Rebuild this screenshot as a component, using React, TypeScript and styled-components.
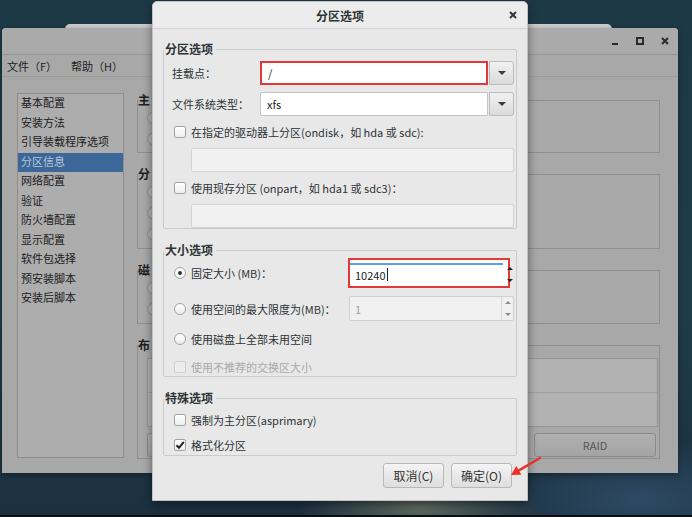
import React from 'react';
import styled, { createGlobalStyle } from 'styled-components';

const GlobalStyle = createGlobalStyle`
  html, body {
    margin: 0;
    padding: 0;
  }
  body {
    font-family: 'Noto Sans CJK SC', 'Noto Sans', sans-serif;
    font-size: 11px;
    color: #2e3436;
  }
  * {
    box-sizing: border-box;
  }
`;

const Desktop = styled.div`
  position: relative;
  width: 692px;
  height: 517px;
  overflow: hidden;
  background:
    radial-gradient(ellipse 120px 40px at 420px 508px, rgba(105, 115, 100, 0.85), transparent),
    radial-gradient(ellipse 160px 60px at 640px 500px, rgba(50, 80, 110, 0.8), transparent),
    linear-gradient(180deg, #1d3946 0%, #1f3c49 60%, #1c3040 100%);
  border-bottom: 2px solid #0b0e11;
`;

/* ---------- background window ---------- */

const GhostWindow = styled.div`
  position: absolute;
  left: 65px;
  top: 24px;
  width: 547px;
  height: 12px;
  background: #cdcdcd;
  border-radius: 5px 5px 0 0;
`;

const MainWindow = styled.div`
  position: absolute;
  left: 2px;
  top: 28px;
  width: 676px;
  height: 445px;
  background: #a8a8a8;
  border-radius: 4px 4px 0 0;
  display: flex;
  flex-direction: column;
  box-shadow: 0 2px 6px rgba(0, 0, 0, 0.35);
`;

const WinTitleBar = styled.div`
  height: 27px;
  display: flex;
  justify-content: flex-end;
  align-items: center;
  padding-right: 1px;
  border-bottom: 1px solid #949494;
  background: #aaaaaa;
  border-radius: 4px 4px 0 0;
`;

const WinControl = styled.span`
  width: 25px;
  height: 16px;
  display: flex;
  align-items: center;
  justify-content: center;
`;

const MenuBar = styled.div`
  height: 22px;
  display: flex;
  align-items: center;
  gap: 14px;
  padding-left: 5px;
  border-bottom: 1px solid #9b9b9b;
`;

const MenuItem = styled.span`
  color: #222;
  font-size: 11px;
`;

const WinBody = styled.div`
  display: flex;
  align-items: flex-start;
  gap: 13px;
  padding: 16px 18px 0 15px;
`;

const NavList = styled.div`
  width: 107px;
  height: 365px;
  background: #adadad;
  border: 1px solid #8d8d8d;
`;

const NavItem = styled.div<{ $active?: boolean }>`
  height: 19.5px;
  line-height: 17px;
  padding-left: 3px;
  font-size: 11px;
  white-space: nowrap;
  color: ${(p) => (p.$active ? '#b8c6d8' : '#1b1b1b')};
  background: ${(p) => (p.$active ? '#3c6899' : 'transparent')};
`;

const RightPanel = styled.div`
  width: 523px;
  display: flex;
  flex-direction: column;
  gap: 14px;
`;

const BgGroup = styled.fieldset<{ $h: number }>`
  margin: 0;
  padding: 0;
  min-width: 0;
  height: ${(p) => p.$h}px;
  border: 1px solid #8e8e8e;
`;

const BgLegend = styled.legend`
  padding: 0 3px 0 0;
  font-size: 12px;
  font-weight: bold;
  line-height: 14px;
  color: #1d1d1d;
`;

const BgContent = styled.div`
  display: flex;
  flex-direction: column;
  padding: 0 1px 0 9px;
`;

const BgOption = styled.div`
  height: 21px;
  display: flex;
  align-items: center;
`;

const BgRadio = styled.span`
  width: 12px;
  height: 12px;
  border-radius: 50%;
  border: 1px solid #8a8a8a;
  background: #b2b2b2;
`;

const BgTable = styled.div`
  margin-top: 6px;
  height: 69px;
  background: #b2b2b2;
  border: 1px solid #939393;
  display: flex;
  flex-direction: column;
`;

const BgTableRow = styled.div`
  flex: 1;
  border-bottom: 1px solid #9e9e9e;
  &:last-child {
    border-bottom: none;
  }
`;

const BgButtonRow = styled.div`
  margin-top: 6px;
  display: grid;
  grid-template-columns: repeat(4, 122px);
  gap: 7px;
`;

const BgButton = styled.div`
  height: 24px;
  display: flex;
  align-items: center;
  justify-content: center;
  border: 1px solid #8a8a8a;
  border-radius: 3px;
  background: linear-gradient(#b0b0b0, #a4a4a4);
  color: #555;
  font-size: 11px;
`;

/* ---------- dialog ---------- */

const Dialog = styled.div`
  position: absolute;
  left: 152px;
  top: 1px;
  width: 376px;
  height: 500px;
  background: #e8e8e8;
  border: 1px solid #c2c2c2;
  border-radius: 5px 5px 0 0;
  box-shadow: 0 3px 10px rgba(0, 0, 0, 0.45);
  display: flex;
  flex-direction: column;
`;

const DialogTitleBar = styled.div`
  height: 27px;
  display: grid;
  grid-template-columns: 1fr auto 1fr;
  align-items: center;
  background: #ececec;
  border-bottom: 1px solid #d2d2d2;
  border-radius: 5px 5px 0 0;
`;

const DialogTitle = styled.span`
  grid-column: 2;
  font-size: 12px;
  font-weight: bold;
  color: #2e3436;
`;

const DialogClose = styled.span`
  justify-self: end;
  padding-right: 10px;
  display: flex;
`;

const DialogBody = styled.div`
  padding: 13px 10px 0 10px;
  display: flex;
  flex-direction: column;
`;

const GroupStack = styled.div`
  display: flex;
  flex-direction: column;
  gap: 14px;
`;

const Group = styled.fieldset<{ $h: number }>`
  margin: 0;
  padding: 0;
  min-width: 0;
  height: ${(p) => p.$h}px;
  border: 1px solid #cbcbcb;
  border-radius: 2px;
  display: flex;
  flex-direction: column;
`;

const Legend = styled.legend`
  padding: 0 3px 0 1px;
  font-size: 12px;
  font-weight: bold;
  line-height: 14px;
  color: #2e3436;
`;

const GroupContent = styled.div<{ $top: number; $gap: number }>`
  display: flex;
  flex-direction: column;
  padding-top: ${(p) => p.$top}px;
  gap: ${(p) => p.$gap}px;
`;

const FieldRow = styled.div`
  display: grid;
  grid-template-columns: 88px 1fr;
  align-items: center;
  padding: 0 2px 0 8px;
`;

const FieldLabel = styled.span`
  color: #2e3436;
  white-space: nowrap;
`;

const Combo = styled.div`
  display: flex;
  height: 24px;
`;

const Entry = styled.div<{ $highlight?: boolean }>`
  flex: 1;
  display: flex;
  align-items: center;
  padding-left: 6px;
  background: #fff;
  border: ${(p) => (p.$highlight ? '2px solid #e2383a' : '1px solid #c4c4c4')};
  border-radius: ${(p) => (p.$highlight ? '0' : '2px 0 0 2px')};
  font-size: 11px;
  color: #222;
`;

const ComboButton = styled.div`
  width: 25px;
  margin-left: 1px;
  display: flex;
  align-items: center;
  justify-content: center;
  background: linear-gradient(#f1f1f1, #dadada);
  border: 1px solid #bcbcbc;
  border-radius: 0 3px 3px 0;
  &::after {
    content: '';
    border-left: 4px solid transparent;
    border-right: 4px solid transparent;
    border-top: 4px solid #3a3a3a;
  }
`;

const OptionRow = styled.div<{ $h?: number; $disabled?: boolean }>`
  height: ${(p) => p.$h ?? 18}px;
  line-height: 16px;
  display: flex;
  align-items: center;
  gap: 5px;
  padding-left: 10px;
  white-space: nowrap;
  color: ${(p) => (p.$disabled ? '#a9a9a9' : '#2e3436')};
`;

const CheckBox = styled.span<{ $disabled?: boolean }>`
  width: 12px;
  height: 12px;
  flex: none;
  display: flex;
  align-items: center;
  justify-content: center;
  border: 1px solid ${(p) => (p.$disabled ? '#d0d0d0' : '#a2a2a2')};
  border-radius: 2px;
  background: ${(p) => (p.$disabled ? '#ececec' : 'linear-gradient(#ffffff, #ededed)')};
`;

const Radio = styled.span<{ $checked?: boolean }>`
  width: 12px;
  height: 12px;
  flex: none;
  display: flex;
  align-items: center;
  justify-content: center;
  border: 1px solid #a2a2a2;
  border-radius: 50%;
  background: linear-gradient(#ffffff, #ededed);
  &::after {
    content: '';
    width: 4px;
    height: 4px;
    border-radius: 50%;
    background: #2e3436;
    display: ${(p) => (p.$checked ? 'block' : 'none')};
  }
`;

const WideEntry = styled.div`
  height: 24px;
  margin: 0 2px 0 27px;
  background: #f1f1f1;
  border: 1px solid #d3d3d3;
  border-radius: 2px;
`;

const SizeRow = styled.div<{ $h: number }>`
  height: ${(p) => p.$h}px;
  display: grid;
  grid-template-columns: 175px 1fr;
  align-items: center;
  padding: 0 2px 0 10px;
`;

const RadioLabel = styled.span`
  display: flex;
  align-items: center;
  gap: 5px;
  line-height: 16px;
  white-space: nowrap;
`;

const SpinHighlight = styled.div`
  height: 30px;
  width: 162px;
  margin-left: -1px;
  display: flex;
  border: 2px solid #e2383a;
  background: #fff;
  padding-top: 3px;
`;

const SpinFocusText = styled.div`
  flex: 1;
  display: flex;
  align-items: center;
  padding: 0 0 2px 5px;
  border-top: 2px solid #5f9be0;
  margin-right: 3px;
  color: #222;
  &::after {
    content: '';
    width: 1px;
    height: 13px;
    margin-left: 1px;
    background: #222;
  }
`;

const SpinArrows = styled.div<{ $dark?: boolean }>`
  width: ${(p) => (p.$dark ? '7px' : '12px')};
  margin-right: ${(p) => (p.$dark ? '-5px' : '0')};
  margin-top: ${(p) => (p.$dark ? '-1px' : '0')};
  display: flex;
  flex-direction: column;
  justify-content: space-around;
  align-items: center;
  border-left: ${(p) => (p.$dark ? 'none' : '1px solid #d6d6d6')};
`;

const Arrow = styled.span<{ $up?: boolean; $dark?: boolean }>`
  width: 0;
  height: 0;
  border-left: 3px solid transparent;
  border-right: 3px solid transparent;
  ${(p) => (p.$up ? 'border-bottom' : 'border-top')}: 3px solid ${(p) => (p.$dark ? '#222' : '#8c8c8c')};
`;

const SpinBox = styled.div`
  height: 25px;
  display: flex;
  background: #f0f0f0;
  border: 1px solid #d0d0d0;
  border-radius: 2px;
`;

const SpinText = styled.div`
  flex: 1;
  display: flex;
  align-items: center;
  padding-left: 5px;
  color: #a0a0a0;
`;

const ButtonRow = styled.div`
  display: flex;
  justify-content: flex-end;
  gap: 7px;
  padding: 7px 5px 0 0;
`;

const Button = styled.div`
  width: 61px;
  height: 25px;
  display: flex;
  align-items: center;
  justify-content: center;
  background: linear-gradient(#f4f4f4, #dedede);
  border: 1px solid #b8b8b8;
  border-radius: 3px;
  font-size: 12px;
  color: #333;
`;

const Annotation = styled.svg`
  position: absolute;
  left: 505px;
  top: 452px;
  pointer-events: none;
`;

const navItems = [
  '基本配置',
  '安装方法',
  '引导装载程序选项',
  '分区信息',
  '网络配置',
  '验证',
  '防火墙配置',
  '显示配置',
  '软件包选择',
  '预安装脚本',
  '安装后脚本',
];

const bgGroups = [
  { legend: '主', h: 60, radios: 2 },
  { legend: '分', h: 82, radios: 3 },
  { legend: '磁', h: 61, radios: 2 },
];

const CheckMark = () => (
  <svg width="10" height="10" viewBox="0 0 10 10">
    <path d="M1.5 5.2 L4 7.8 L8.8 1.8" fill="none" stroke="#222" strokeWidth="2" />
  </svg>
);

const CrossIcon = ({ color = '#2b2b2b' }: { color?: string }) => (
  <svg width="8" height="8" viewBox="0 0 8 8">
    <path d="M1 1 L7 7 M7 1 L1 7" stroke={color} strokeWidth="2" />
  </svg>
);

export default function App() {
  return (
    <>
      <GlobalStyle />
      <Desktop>
        <GhostWindow />
        <MainWindow>
          <WinTitleBar>
            <WinControl>
              <svg width="8" height="8" viewBox="0 0 8 8">
                <rect x="1" y="6" width="6" height="2" fill="#2b2b2b" />
              </svg>
            </WinControl>
            <WinControl>
              <svg width="8" height="8" viewBox="0 0 8 8">
                <rect x="1" y="1" width="6" height="6" fill="none" stroke="#2b2b2b" strokeWidth="2" />
              </svg>
            </WinControl>
            <WinControl>
              <CrossIcon />
            </WinControl>
          </WinTitleBar>
          <MenuBar>
            <MenuItem>文件（F）</MenuItem>
            <MenuItem>帮助（H）</MenuItem>
          </MenuBar>
          <WinBody>
            <NavList>
              {navItems.map((item) => (
                <NavItem key={item} $active={item === '分区信息'}>
                  {item}
                </NavItem>
              ))}
            </NavList>
            <RightPanel>
              {bgGroups.map((g) => (
                <BgGroup key={g.legend} $h={g.h}>
                  <BgLegend>{g.legend}</BgLegend>
                  <BgContent>
                    {Array.from({ length: g.radios }).map((_, i) => (
                      <BgOption key={i}>
                        <BgRadio />
                      </BgOption>
                    ))}
                  </BgContent>
                </BgGroup>
              ))}
              <BgGroup $h={121}>
                <BgLegend>布</BgLegend>
                <BgContent>
                  <BgTable>
                    <BgTableRow />
                    <BgTableRow />
                  </BgTable>
                  <BgButtonRow>
                    <BgButton />
                    <BgButton />
                    <BgButton />
                    <BgButton>RAID</BgButton>
                  </BgButtonRow>
                </BgContent>
              </BgGroup>
            </RightPanel>
          </WinBody>
        </MainWindow>

        <Dialog>
          <DialogTitleBar>
            <DialogTitle>分区选项</DialogTitle>
            <DialogClose>
              <CrossIcon color="#333" />
            </DialogClose>
          </DialogTitleBar>
          <DialogBody>
            <GroupStack>
              <Group $h={187}>
                <Legend>分区选项</Legend>
                <GroupContent $top={5} $gap={7}>
                  <FieldRow>
                    <FieldLabel>挂载点：</FieldLabel>
                    <Combo>
                      <Entry $highlight>/</Entry>
                      <ComboButton />
                    </Combo>
                  </FieldRow>
                  <FieldRow>
                    <FieldLabel>文件系统类型：</FieldLabel>
                    <Combo>
                      <Entry>xfs</Entry>
                      <ComboButton />
                    </Combo>
                  </FieldRow>
                  <OptionRow>
                    <CheckBox />
                    <span>在指定的驱动器上分区(ondisk，如 hda 或 sdc):</span>
                  </OptionRow>
                  <WideEntry />
                  <OptionRow>
                    <CheckBox />
                    <span>使用现存分区 (onpart，如 hda1 或 sdc3)：</span>
                  </OptionRow>
                  <WideEntry />
                </GroupContent>
              </Group>

              <Group $h={134}>
                <Legend>大小选项</Legend>
                <GroupContent $top={1} $gap={8}>
                  <SizeRow $h={30}>
                    <RadioLabel>
                      <Radio $checked />
                      <span>固定大小 (MB)：</span>
                    </RadioLabel>
                    <SpinHighlight>
                      <SpinFocusText>10240</SpinFocusText>
                      <SpinArrows $dark>
                        <Arrow $up $dark />
                        <Arrow $dark />
                      </SpinArrows>
                    </SpinHighlight>
                  </SizeRow>
                  <SizeRow $h={25}>
                    <RadioLabel>
                      <Radio />
                      <span>使用空间的最大限度为(MB)：</span>
                    </RadioLabel>
                    <SpinBox>
                      <SpinText>1</SpinText>
                      <SpinArrows>
                        <Arrow $up />
                        <Arrow />
                      </SpinArrows>
                    </SpinBox>
                  </SizeRow>
                  <OptionRow $h={20}>
                    <Radio />
                    <span>使用磁盘上全部未用空间</span>
                  </OptionRow>
                  <OptionRow $h={20} $disabled>
                    <CheckBox $disabled />
                    <span>使用不推荐的交换区大小</span>
                  </OptionRow>
                </GroupContent>
              </Group>

              <Group $h={65}>
                <Legend>特殊选项</Legend>
                <GroupContent $top={6} $gap={7}>
                  <OptionRow>
                    <CheckBox />
                    <span>强制为主分区(asprimary)</span>
                  </OptionRow>
                  <OptionRow>
                    <CheckBox>
                      <CheckMark />
                    </CheckBox>
                    <span>格式化分区</span>
                  </OptionRow>
                </GroupContent>
              </Group>
            </GroupStack>
            <ButtonRow>
              <Button>取消(C)</Button>
              <Button>确定(O)</Button>
            </ButtonRow>
          </DialogBody>
        </Dialog>

        <Annotation width="40" height="28" viewBox="0 0 40 28">
          <line x1="35" y1="6" x2="14" y2="18.4" stroke="#e8332a" strokeWidth="2.5" strokeLinecap="round" />
          <polygon points="6,23 16.3,22.7 11.3,14.1" fill="#e8332a" />
        </Annotation>
      </Desktop>
    </>
  );
}
